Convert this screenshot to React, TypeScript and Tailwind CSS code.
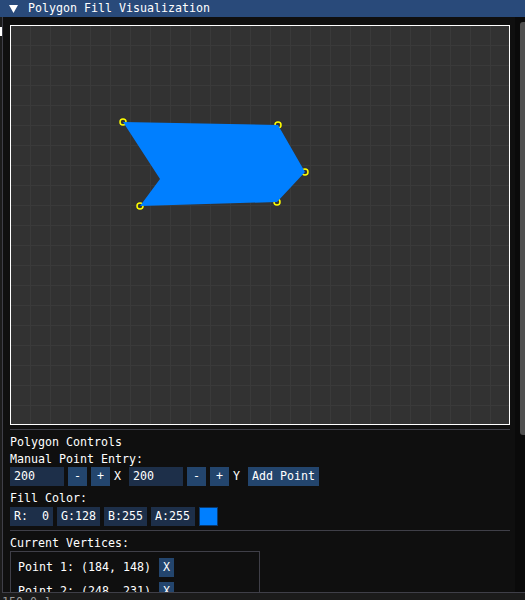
import React from "react";

const font = "font-['DejaVu_Sans_Mono',monospace] text-[11.63px] leading-[13px]";

const poly = "113,97 268,100 295,147 267,177 130,181 150,154";
const vertices = [
  [113, 97],
  [268, 100],
  [295, 147],
  [267, 177],
  [130, 181],
];

function Canvas() {
  const xs = Array.from({ length: 24 }, (_, i) => (i + 1) * 20);
  const ys = Array.from({ length: 19 }, (_, i) => (i + 1) * 20);
  return (
    <div className="w-[500px] h-[400px] border border-white bg-[#323232] shrink-0">
      <svg width="498" height="398" viewBox="1 1 498 398" className="block">
        {xs.map((x) => (
          <line key={"x" + x} x1={x + 0.5} y1={0} x2={x + 0.5} y2={400} stroke="#3a3a3a" strokeWidth={1} />
        ))}
        {ys.map((y) => (
          <line key={"y" + y} x1={0} y1={y + 0.5} x2={500} y2={y + 0.5} stroke="#3a3a3a" strokeWidth={1} />
        ))}
        {vertices.map(([x, y]) => (
          <circle key={x + "-" + y} cx={x} cy={y} r={3} fill="none" stroke="#ffff00" strokeWidth={1.5} />
        ))}
        <polygon points={poly} fill="#007fff" />
      </svg>
    </div>
  );
}

function Btn({ children, w }: { children: React.ReactNode; w: string }) {
  return (
    <div className={`${w} h-[19px] bg-[#23456d] text-white flex items-center justify-center shrink-0`}>
      {children}
    </div>
  );
}

function Field({ children, w }: { children: React.ReactNode; w: string }) {
  return (
    <div className={`${w} h-[19px] bg-[#1d2f49] text-white flex items-center px-[4px] shrink-0 whitespace-pre`}>
      {children}
    </div>
  );
}

function Label({ children }: { children: React.ReactNode }) {
  return <div className="mt-[4px] h-[13px] leading-[17px]">{children}</div>;
}

function Separator() {
  return <div className="h-px w-[500px] bg-[#3f3f48]" />;
}

export default function App() {
  return (
    <div className={`w-[525px] h-[600px] overflow-hidden bg-[#1b1b1b] text-white ${font} flex flex-col`}>
      {/* title bar */}
      <div className="h-[17px] bg-[#294a7a] flex items-center shrink-0">
        <svg width="9" height="8" viewBox="0 0 9 8" className="ml-[9px]">
          <polygon points="0,0 9,0 4.5,8" fill="#ffffff" />
        </svg>
        <span className="ml-[10px] leading-[15px]">Polygon Fill Visualization</span>
      </div>

      <div className="flex flex-row h-[576px] shrink-0">
        {/* background window peeking out on the left */}
        <div className="w-[2px] flex flex-col shrink-0">
          <div className="h-[10px]" />
          <div className="h-[9px] w-[2px] bg-white" />
        </div>

        {/* window body */}
        <div className="flex-1 flex flex-row bg-[#0f0f0f] border-l border-b border-[#3f3f48] overflow-hidden">
          <div className="flex flex-col pl-[7px] pt-[8px] w-[510px] shrink-0">
            <Canvas />
            <div className="mt-[4px]">
              <Separator />
            </div>
            <Label>Polygon Controls</Label>
            <Label>Manual Point Entry:</Label>
            <div className="mt-[3px] flex flex-row items-center">
              <Field w="w-[54px]">200</Field>
              <div className="ml-[4px]"><Btn w="w-[19px]">-</Btn></div>
              <div className="ml-[4px]"><Btn w="w-[19px]">+</Btn></div>
              <span className="ml-[4px] w-[7px]">X</span>
              <div className="ml-[8px]"><Field w="w-[54px]">200</Field></div>
              <div className="ml-[4px]"><Btn w="w-[19px]">-</Btn></div>
              <div className="ml-[4px]"><Btn w="w-[19px]">+</Btn></div>
              <span className="ml-[4px] w-[7px]">Y</span>
              <div className="ml-[8px]"><Btn w="w-[71px]">Add Point</Btn></div>
            </div>
            <Label>Fill Color:</Label>
            <div className="mt-[4px] flex flex-row items-center gap-[4px]">
              <Field w="w-[43px]">{"R:  0"}</Field>
              <Field w="w-[43px]">G:128</Field>
              <Field w="w-[43px]">B:255</Field>
              <Field w="w-[44px]">A:255</Field>
              <div className="w-[19px] h-[19px] bg-[#007fff] border border-[#0a3a70]" />
            </div>
            <div className="mt-[4px]">
              <Separator />
            </div>
            <Label>Current Vertices:</Label>
            <div className="mt-[3px] w-[250px] h-[60px] border border-[#3f3f48] flex flex-col px-[7px] pt-[6px] gap-[5px]">
              <div className="flex flex-row items-center h-[19px] shrink-0">
                <span className="whitespace-pre">Point 1: (184, 148)</span>
                <div className="ml-[8px]"><Btn w="w-[15px]">X</Btn></div>
              </div>
              <div className="flex flex-row items-center h-[19px] shrink-0">
                <span className="whitespace-pre">Point 2: (248, 231)</span>
                <div className="ml-[8px]"><Btn w="w-[15px]">X</Btn></div>
              </div>
            </div>
          </div>

          {/* scrollbar */}
          <div className="ml-[2px] w-[10px] bg-[#0a0a0a] pt-[5px] flex flex-row justify-end shrink-0">
            <div className="w-[5px] h-[413px] bg-[#4f4f4f] rounded-l-[3px]" />
          </div>
        </div>
      </div>

      {/* window behind */}
      <div className="flex-1 pl-[2px] text-[#9a9a9a] overflow-hidden leading-[10px] pt-[4px]">150.0 ]</div>
    </div>
  );
}
